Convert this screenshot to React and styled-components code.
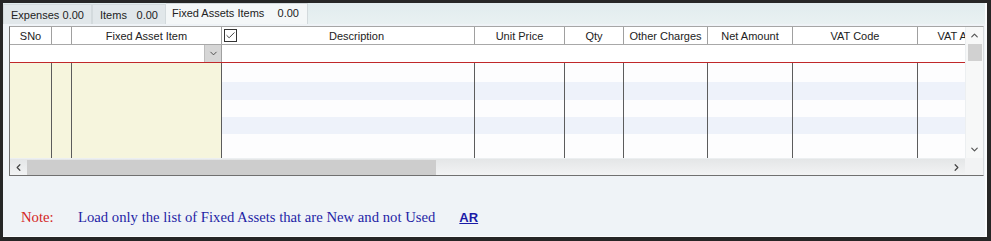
import React from 'react';
import styled, { createGlobalStyle } from 'styled-components';
import { ChevronUp, ChevronDown, ChevronLeft, ChevronRight, Check } from 'lucide-react';

const GlobalStyle = createGlobalStyle`
  html, body {
    margin: 0;
    padding: 0;
    background: #262626;
  }
  * { box-sizing: border-box; }
`;

// column widths incl. right border
const columns = [
  { name: 'SNo', width: 42, frozen: true },
  { name: '', width: 20, frozen: true },
  { name: 'Fixed Asset Item', width: 150, frozen: true },
  { name: 'Description', width: 253, check: true },
  { name: 'Unit Price', width: 90 },
  { name: 'Qty', width: 59 },
  { name: 'Other Charges', width: 84 },
  { name: 'Net Amount', width: 85 },
  { name: 'VAT Code', width: 125 },
  { name: 'VAT Amount', width: 100 },
];

const rowHeights = [19, 18, 17, 17, 24];

const tabs = [
  { label: 'Expenses', value: '0.00', width: 89 },
  { label: 'Items', value: '0.00', width: 74 },
  { label: 'Fixed Assets Items', value: '0.00', width: 142, active: true },
];

const App = () => {
  return (
    <>
      <GlobalStyle />
      <Frame>
        <Panel>
          <TabStrip>
            {tabs.map((t) => (
              <Tab key={t.label} $active={t.active} style={{ width: t.width }}>
                <span>{t.label}</span>
                <span>{t.value}</span>
              </Tab>
            ))}
          </TabStrip>

          <GridBox>
            <Viewport>
              <HeaderRow>
                {columns.map((c, i) => (
                  <HeaderCell key={i} style={{ width: c.width }} $check={c.check}>
                    {c.check && (
                      <CheckBox>
                        <Check size={11} strokeWidth={2} color="#333" />
                      </CheckBox>
                    )}
                    <HeaderText $check={c.check}>{c.name}</HeaderText>
                  </HeaderCell>
                ))}
              </HeaderRow>

              <FilterRow>
                <FilterSpacer style={{ width: 212 }}>
                  <DropButton>
                    <ChevronDown size={11} strokeWidth={2} color="#444" />
                  </DropButton>
                </FilterSpacer>
              </FilterRow>

              <Body>
                {rowHeights.map((h, r) => (
                  <BodyRow key={r} style={{ height: h }}>
                    {columns.map((c, i) => (
                      <Cell
                        key={i}
                        style={{ width: c.width }}
                        $frozen={c.frozen}
                        $alt={r % 2 === 1}
                      />
                    ))}
                  </BodyRow>
                ))}
              </Body>
            </Viewport>

            <VScroll>
              <ArrowBox>
                <ChevronUp size={11} strokeWidth={2.6} color="#555" />
              </ArrowBox>
              <VThumb />
              <Track />
              <ArrowBox>
                <ChevronDown size={11} strokeWidth={2.6} color="#555" />
              </ArrowBox>
            </VScroll>

            <HScroll>
              <ArrowBox>
                <ChevronLeft size={11} strokeWidth={2.6} color="#444" />
              </ArrowBox>
              <HThumb />
              <Track />
              <ArrowBox>
                <ChevronRight size={11} strokeWidth={2.6} color="#444" />
              </ArrowBox>
            </HScroll>
            <Corner />
          </GridBox>

          <Footer>
            <NoteLabel>Note:</NoteLabel>
            <NoteText>Load only the list of Fixed Assets that are New and not Used</NoteText>
            <ARLink href="#">AR</ARLink>
          </Footer>
        </Panel>
      </Frame>
    </>
  );
};

export default App;

const Frame = styled.div`
  width: 991px;
  height: 241px;
  padding: 3px 4px 4px 3px;
  background: #262626;
`;

const Panel = styled.div`
  display: flex;
  flex-direction: column;
  width: 100%;
  height: 100%;
  background: #eff3f7;
  border-right: 2px solid #fbfcfd;
  border-bottom: 1px solid #fbfcfd;
  font-family: "Liberation Sans", Arial, sans-serif;
  font-size: 11px;
  color: #222;
`;

const TabStrip = styled.div`
  display: flex;
  align-items: flex-end;
  height: 21px;
  background: linear-gradient(#e1ecee, #e9f1f2);
`;

const Tab = styled.div`
  display: flex;
  align-items: center;
  justify-content: space-between;
  height: ${(p) => (p.$active ? '21px' : '20px')};
  padding: ${(p) => (p.$active ? '0 8px 3px 6px' : '0 7px 0 7px')};
  background: ${(p) => (p.$active ? '#f4f7f8' : '#e1e7ea')};
  border: 1px solid #d3dadd;
  border-bottom: none;
  border-left: ${(p) => (p.$active ? 'none' : '1px solid #d3dadd')};
  white-space: nowrap;
  font-size: 11px;
`;

const GridBox = styled.div`
  display: grid;
  grid-template-columns: 955px 18px;
  grid-template-rows: 131px 17px;
  margin: 2px 0 0 6px;
  width: 975px;
  height: 150px;
  border-top: 1px solid #a6a6a6;
  border-left: 1px solid #707070;
  border-bottom: 1px solid #707070;
  border-right: 1px solid #d8dcdf;
  background: #fff;
`;

const Viewport = styled.div`
  display: flex;
  flex-direction: column;
  overflow: hidden;
`;

const HeaderRow = styled.div`
  display: flex;
  flex: none;
  height: 18px;
  border-bottom: 1px solid #a8a8a8;
  background: #fff;
`;

const HeaderCell = styled.div`
  display: flex;
  flex: none;
  align-items: center;
  justify-content: center;
  padding-left: ${(p) => (p.$check ? '2px' : '0')};
  border-right: 1px solid #a0a0a0;
  overflow: hidden;
  white-space: nowrap;
`;

const HeaderText = styled.span`
  flex: 1;
  text-align: center;
  padding-top: 1px;
  padding-left: ${(p) => (p.$check ? '2px' : '0')};
`;

const CheckBox = styled.div`
  display: flex;
  align-items: center;
  justify-content: center;
  width: 13px;
  height: 13px;
  border: 1px solid #333;
  background: #fff;
`;

const FilterRow = styled.div`
  display: flex;
  flex: none;
  height: 18px;
  border-bottom: 1px solid #c0282a;
  background: #fff;
`;

const FilterSpacer = styled.div`
  display: flex;
  justify-content: flex-end;
  border-right: 1px solid #a0a0a0;
`;

const DropButton = styled.div`
  display: flex;
  align-items: center;
  justify-content: center;
  width: 17px;
  height: 17px;
  background: #d6d6d6;
  border-left: 1px solid #bdbdbd;
`;

const Body = styled.div`
  display: flex;
  flex-direction: column;
  flex: 1;
`;

const BodyRow = styled.div`
  display: flex;
  flex: none;
`;

const Cell = styled.div`
  flex: none;
  height: 100%;
  border-right: 1px solid #5c5c5c;
  background: ${(p) =>
    p.$frozen ? '#f6f5dd' : p.$alt ? '#eef2fa' : '#fdfdfe'};
`;

const VScroll = styled.div`
  display: flex;
  flex-direction: column;
  align-items: center;
  background: #f7f8f8;
  border-left: 1px solid #eceff1;
`;

const ArrowBox = styled.div`
  display: flex;
  flex: none;
  align-items: center;
  justify-content: center;
  width: 17px;
  height: 17px;
`;

const VThumb = styled.div`
  flex: none;
  width: 14px;
  height: 17px;
  background: #d1d1d1;
`;

const Track = styled.div`
  flex: 1;
`;

const HScroll = styled.div`
  display: flex;
  align-items: center;
  background: linear-gradient(#e4e6e7, #f2f3f4);
  border-top: 1px solid #eceff1;
`;

const HThumb = styled.div`
  flex: none;
  width: 409px;
  height: 15px;
  background: #cdcdcd;
`;

const Corner = styled.div`
  background: #f2f3f4;
`;

const Footer = styled.div`
  display: flex;
  align-items: baseline;
  padding: 33px 0 0 18px;
  font-family: "Liberation Serif", "Times New Roman", serif;
  font-size: 14.7px;
`;

const NoteLabel = styled.span`
  color: #d42424;
  width: 57px;
`;

const NoteText = styled.span`
  color: #1f1fa6;
`;

const ARLink = styled.a`
  margin-left: 24px;
  font-family: "Liberation Sans", Arial, sans-serif;
  font-size: 13px;
  font-weight: bold;
  color: #1a1aa6;
  text-decoration: underline;
`;
